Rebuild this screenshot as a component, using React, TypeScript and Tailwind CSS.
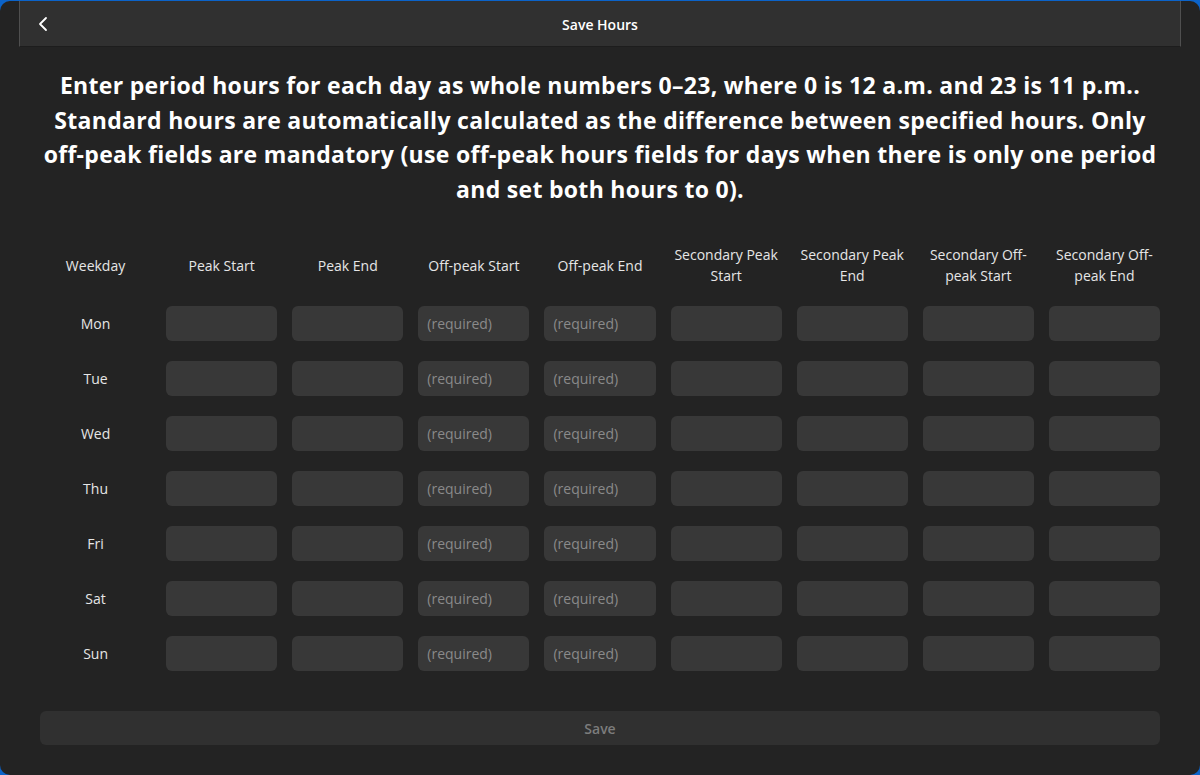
import React from 'react';

const columns = [
  'Weekday',
  'Peak Start',
  'Peak End',
  'Off-peak Start',
  'Off-peak End',
  'Secondary Peak Start',
  'Secondary Peak End',
  'Secondary Off-peak Start',
  'Secondary Off-peak End',
];

const days = ['Mon', 'Tue', 'Wed', 'Thu', 'Fri', 'Sat', 'Sun'];

// which input columns are required (index within the 8 inputs)
const required = [2, 3];

const App = () => {
  return (
    <div className="w-[1200px] h-[775px] bg-[#0b63c9] pt-px" style={{ fontFamily: '"Open Sans", "Noto Sans", sans-serif' }}>
      <div className="h-[774px] bg-[#232323] rounded-[10px] flex flex-col overflow-hidden">
        <div className="mx-[19px] h-[46px] bg-[#303030] border-x border-[#4f4f4f] border-b border-b-[#1d1d1d] flex items-center relative">
          <button className="absolute left-[17px] top-[13px] text-white">
            <svg width="12" height="20" viewBox="0 0 12 20" fill="none">
              <path d="M9 4L3 10L9 16" stroke="white" strokeWidth="1.8" strokeLinecap="round" strokeLinejoin="round" />
            </svg>
          </button>
          <div className="flex-1 text-center text-white text-[14px] font-semibold pt-[2px]">Save Hours</div>
        </div>

        <div className="px-10 flex flex-col flex-1">
          <p className="mt-[21px] text-white text-center font-bold text-[23px] leading-[34.5px] tracking-[0.3px] whitespace-nowrap">
            Enter period hours for each day as whole numbers 0–23, where 0 is 12 a.m. and 23 is 11 p.m..
            <br />
            Standard hours are automatically calculated as the difference between specified hours. Only
            <br />
            off-peak fields are mandatory (use off-peak hours fields for days when there is only one period
            <br />
            and set both hours to 0).
          </p>

          <div className="mt-[37px] grid grid-cols-9 gap-x-[15px] text-[14px] text-[#e6e6e6]">
            {columns.map((c) => (
              <div key={c} className="h-[44px] flex items-center justify-center text-center leading-[21px]">
                {c}
              </div>
            ))}
          </div>

          <div className="mt-[19px] flex flex-col gap-[20px]">
            {days.map((d) => (
              <div key={d} className="grid grid-cols-9 gap-x-[15px] text-[14px]">
                <div className="h-[35px] flex items-center justify-center text-[#e6e6e6]">{d}</div>
                {Array.from({ length: 8 }).map((_, i) => (
                  <input
                    key={i}
                    className="h-[35px] w-full rounded-[6px] bg-[#383838] px-[9px] text-white placeholder:text-[#8a8a8a] outline-none"
                    placeholder={required.includes(i) ? '(required)' : ''}
                  />
                ))}
              </div>
            ))}
          </div>

          <button className="mt-[40px] h-[34px] w-full rounded-[6px] bg-[#303030] text-[#7c7c7c] text-[14px] font-semibold">
            Save
          </button>
        </div>
      </div>
    </div>
  );
};

export default App;
